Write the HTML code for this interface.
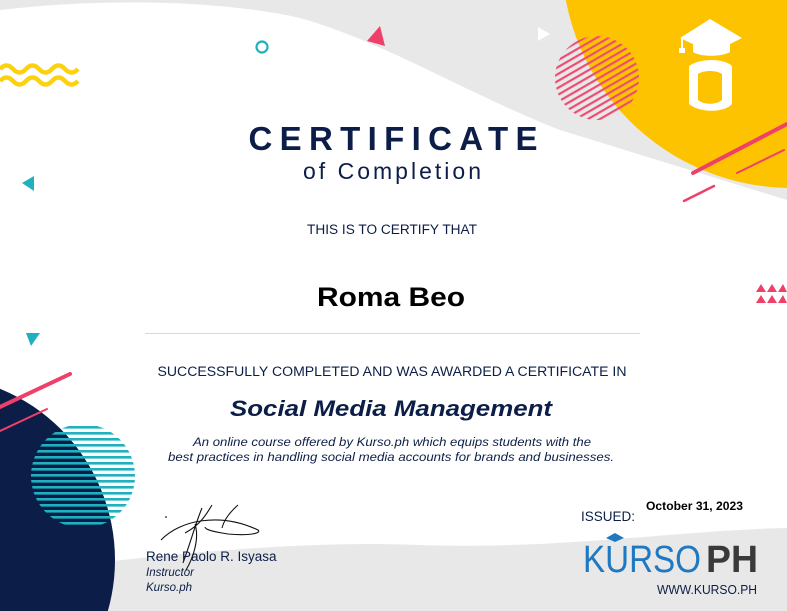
<!DOCTYPE html>
<html><head><meta charset="utf-8"><style>
html,body{margin:0;padding:0;background:#fff;width:787px;height:611px;overflow:hidden}
svg{display:block;position:absolute;top:0;left:0}
text{font-family:"Liberation Sans",sans-serif}
</style></head><body>
<svg width="787" height="611" viewBox="0 0 787 611" xmlns="http://www.w3.org/2000/svg">
<defs>
<pattern id="pk" width="6" height="6" patternUnits="userSpaceOnUse" patternTransform="rotate(-30)">
<rect width="6" height="2.2" fill="#ee4d72"/></pattern>
<pattern id="tl" width="8" height="6" patternUnits="userSpaceOnUse">
<rect width="8" height="2.6" fill="#1fb1c0"/></pattern>
</defs>
<path d="M0,0 L787,0 L787,200 L560,130 C470,95 380,40 300,18 C220,0 100,-2 0,10 Z" fill="#e8e8e8"/>
<path d="M0,611 L0,575 C150,555 300,540 420,545 C560,550 680,530 787,528 L787,611 Z" fill="#e8e8e8"/>
<circle cx="792" cy="-42" r="230" fill="#fdc300"/>
<circle cx="597" cy="78" r="42" fill="url(#pk)"/>
<g fill="#fff">
<path d="M680,38 L710,19 L742,38 L712,53 Z"/>
<path d="M693,41 C700,48 722,48 730,41 L730,52 C722,57 700,57 693,52 Z"/>
<rect x="681" y="38" width="2" height="12"/>
<rect x="679" y="48" width="6" height="5"/>
<path d="M689,66 C700,58 724,58 732,66 L732,104 C724,113 700,113 689,104 Z M698,74 L698,100 C704,105 716,105 722,100 L722,74 C716,70 704,70 698,74 Z" fill-rule="evenodd"/>
</g>
<g stroke="#ee4069" stroke-linecap="round">
<line x1="693" y1="173" x2="787" y2="124" stroke-width="4"/>
<line x1="737" y1="173" x2="784" y2="150" stroke-width="2"/>
<line x1="684" y1="201" x2="714" y2="186" stroke-width="2.5"/>
</g>
<g fill="#ee4069">
<path d="M756,292 L761,284 L766,292Z M767,292 L772,284 L777,292Z M778,292 L783,284 L787,292Z"/>
<path d="M756,303 L761,295 L766,303Z M767,303 L772,295 L777,303Z M778,303 L783,295 L787,303Z"/>
</g>
<circle cx="262" cy="47" r="5.5" fill="none" stroke="#1fb1c0" stroke-width="2.2"/>
<path d="M367,41 L380,26 L385,46 Z" fill="#ee4069"/>
<path d="M538,27 L550,34 L538,41 Z" fill="#fff"/>
<path d="M22,183 L34,176 L34,191 Z" fill="#1fb1c0"/>
<path d="M26,333 L40,333 L31,346 Z" fill="#1fb1c0"/>
<g fill="none" stroke="#fcd20f" stroke-width="4.5">
<path d="M0,69 q6.5,-7 13,0 t13,0 t13,0 t13,0 t13,0 t13,0"/>
<path d="M0,81 q6.5,-7 13,0 t13,0 t13,0 t13,0 t13,0 t13,0"/>
</g>
<circle cx="-70" cy="560" r="185" fill="#0c1e47"/>
<circle cx="83" cy="476" r="52" fill="url(#tl)"/>
<g stroke="#ee4069" stroke-linecap="round">
<line x1="0" y1="407" x2="70" y2="374" stroke-width="4"/>
<line x1="0" y1="431" x2="47" y2="409" stroke-width="2"/>
</g>
<text x="393" y="150" text-anchor="middle" font-size="33" font-weight="bold" fill="#0c1e47" textLength="289" lengthAdjust="spacing">CERTIFICATE</text>
<text x="392" y="179" text-anchor="middle" font-size="23" fill="#0c1e47" textLength="178" lengthAdjust="spacing">of Completion</text>
<text x="392" y="234" text-anchor="middle" font-size="13.5" fill="#0c1e47" textLength="170" lengthAdjust="spacingAndGlyphs">THIS IS TO CERTIFY THAT</text>
<text x="391" y="306" text-anchor="middle" font-size="27" font-weight="bold" fill="#000" textLength="148" lengthAdjust="spacingAndGlyphs">Roma Beo</text>
<line x1="145" y1="333.5" x2="640" y2="333.5" stroke="#d8d8d8" stroke-width="1"/>
<text x="392" y="376" text-anchor="middle" font-size="13.5" fill="#0c1e47" textLength="469" lengthAdjust="spacingAndGlyphs">SUCCESSFULLY COMPLETED AND WAS AWARDED A CERTIFICATE IN</text>
<text x="391" y="416" text-anchor="middle" font-size="22" font-weight="bold" font-style="italic" fill="#0c1e47" textLength="322" lengthAdjust="spacingAndGlyphs">Social Media Management</text>
<text x="392" y="446" text-anchor="middle" font-size="11.5" font-style="italic" fill="#0c1e47" textLength="398" lengthAdjust="spacingAndGlyphs">An online course offered by Kurso.ph which equips students with the</text>
<text x="391" y="461" text-anchor="middle" font-size="11.5" font-style="italic" fill="#0c1e47" textLength="446" lengthAdjust="spacingAndGlyphs">best practices in handling social media accounts for brands and businesses.</text>
<g fill="none" stroke="#111" stroke-width="1.1">
<path d="M165,517 L167,517"/>
<path d="M161,540 C180,520 220,512 258,530 C262,533 250,536 228,534 C215,532 205,530 205,527"/>
<path d="M202,508 C196,522 192,538 183,563 M185,533 C200,525 206,515 212,505"/>
<path d="M238,505 C230,512 224,520 222,528"/>
<path d="M195,524 C200,540 192,560 186,570"/>
</g>
<text x="146" y="561" font-size="13.5" fill="#0c1e47">Rene Paolo R. Isyasa</text>
<text x="146" y="576" font-size="11.5" font-style="italic" fill="#0c1e47">Instructor</text>
<text x="146" y="591" font-size="11.5" font-style="italic" fill="#0c1e47">Kurso.ph</text>
<text x="581" y="521" font-size="13.5" fill="#0c1e47" textLength="54" lengthAdjust="spacingAndGlyphs">ISSUED:</text>
<text x="646" y="510" font-size="12" font-weight="bold" fill="#000" textLength="97" lengthAdjust="spacingAndGlyphs">October 31, 2023</text>
<text x="583" y="572" font-size="38" fill="#1e78c2" textLength="118" lengthAdjust="spacingAndGlyphs">KURSO</text>
<text x="706" y="572" font-size="38" font-weight="bold" fill="#3a3a3a" textLength="52" lengthAdjust="spacingAndGlyphs">PH</text>
<path d="M606,538 L615,533 L624,538 L615,542 Z" fill="#1e78c2"/>
<text x="657" y="594" font-size="12.5" fill="#0c1e47" textLength="100" lengthAdjust="spacingAndGlyphs">WWW.KURSO.PH</text>
</svg>
</body></html>
